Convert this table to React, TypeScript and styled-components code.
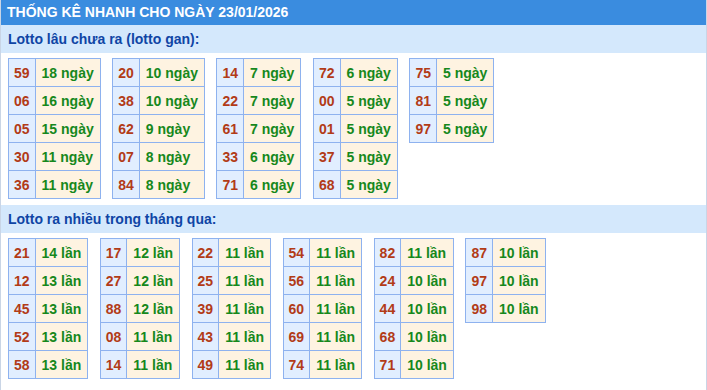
import React from "react"
import styled, { createGlobalStyle } from "styled-components"

const GlobalStyle = createGlobalStyle`
  html, body {
    margin: 0;
    padding: 0;
    background: #ffffff;
    font-family: "Liberation Sans", Arial, sans-serif;
  }
`

const Box = styled.div`
  width: 707px;
  height: 390px;
  box-sizing: border-box;
  border-left: 1px solid #c9d5e6;
  border-right: 1px solid #c9d5e6;
  overflow: hidden;
`

const Title = styled.div`
  height: 25px;
  line-height: 25px;
  margin: 0 -1px;
  padding-left: 7px;
  background: #3a8cdf;
  color: #ffffff;
  font-size: 14px;
  font-weight: bold;
`

const SubTitle = styled.div`
  height: 28px;
  line-height: 28px;
  padding-left: 7px;
  background: #d4e8fc;
  color: #0f45a5;
  font-size: 14px;
  font-weight: bold;
`

const TableRow = styled.div`
  display: flex;
  align-items: flex-start;
  gap: 11.5px;
  padding: 5px 7px 6px;
`

const Table = styled.table`
  border-collapse: collapse;
  font-size: 14px;
  font-weight: bold;
`

const Num = styled.td`
  height: 28px;
  padding: 0 5px;
  box-sizing: border-box;
  border: 1px solid #8eb2ef;
  background: #e1eeff;
  color: #b23b17;
  text-align: center;
`

const Count = styled.td`
  height: 28px;
  padding: 0 6px;
  box-sizing: border-box;
  border: 1px solid #8eb2ef;
  background: #fef3e1;
  color: #16881c;
  text-align: left;
  white-space: nowrap;
`

type Item = [string, number]

const gan: Item[][] = [
  [["59", 18], ["06", 16], ["05", 15], ["30", 11], ["36", 11]],
  [["20", 10], ["38", 10], ["62", 9], ["07", 8], ["84", 8]],
  [["14", 7], ["22", 7], ["61", 7], ["33", 6], ["71", 6]],
  [["72", 6], ["00", 5], ["01", 5], ["37", 5], ["68", 5]],
  [["75", 5], ["81", 5], ["97", 5]],
]

const nhieu: Item[][] = [
  [["21", 14], ["12", 13], ["45", 13], ["52", 13], ["58", 13]],
  [["17", 12], ["27", 12], ["88", 12], ["08", 11], ["14", 11]],
  [["22", 11], ["25", 11], ["39", 11], ["43", 11], ["49", 11]],
  [["54", 11], ["56", 11], ["60", 11], ["69", 11], ["74", 11]],
  [["82", 11], ["24", 10], ["44", 10], ["68", 10], ["71", 10]],
  [["87", 10], ["97", 10], ["98", 10]],
]

const Group = ({ groups, unit }: { groups: Item[][]; unit: string }) => (
  <TableRow>
    {groups.map((rows, i) => (
      <Table key={i}>
        <tbody>
          {rows.map(([num, n]) => (
            <tr key={num}>
              <Num>{num}</Num>
              <Count>
                {n} {unit}
              </Count>
            </tr>
          ))}
        </tbody>
      </Table>
    ))}
  </TableRow>
)

export default function App() {
  return (
    <>
      <GlobalStyle />
      <Box>
        <Title>THỐNG KÊ NHANH CHO NGÀY 23/01/2026</Title>
        <SubTitle>Lotto lâu chưa ra (lotto gan):</SubTitle>
        <Group groups={gan} unit="ngày" />
        <SubTitle>Lotto ra nhiều trong tháng qua:</SubTitle>
        <Group groups={nhieu} unit="lần" />
      </Box>
    </>
  )
}
